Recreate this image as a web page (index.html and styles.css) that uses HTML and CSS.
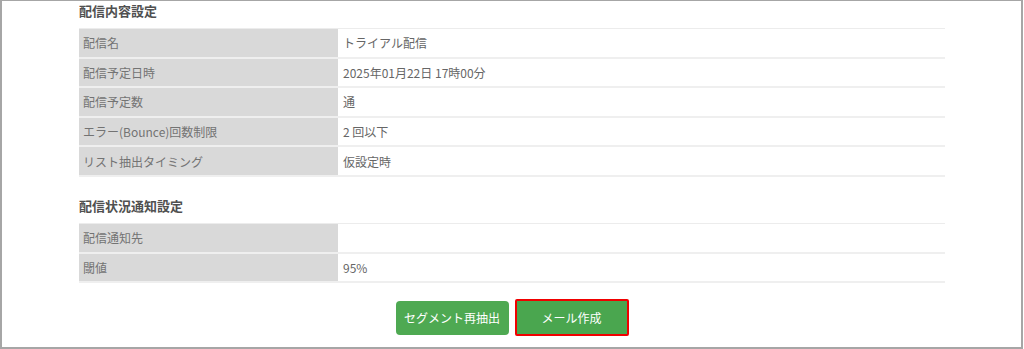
FILE: index.html
```html
<!DOCTYPE html>
<html lang="ja">
<head>
<meta charset="utf-8">
<link rel="stylesheet" href="styles.css">
</head>
<body>
<div class="frame">
  <div class="content">
    <h2 class="heading">配信内容設定</h2>
    <div class="table">
      <div class="row"><div class="label">配信名</div><div class="value">トライアル配信</div></div>
      <div class="row"><div class="label">配信予定日時</div><div class="value">2025年01月22日 17時00分</div></div>
      <div class="row"><div class="label">配信予定数</div><div class="value">通</div></div>
      <div class="row"><div class="label">エラー(Bounce)回数制限</div><div class="value">2 回以下</div></div>
      <div class="row"><div class="label">リスト抽出タイミング</div><div class="value">仮設定時</div></div>
    </div>
    <h2 class="heading heading-second">配信状況通知設定</h2>
    <div class="table">
      <div class="row"><div class="label">配信通知先</div><div class="value"></div></div>
      <div class="row"><div class="label">閾値</div><div class="value">95%</div></div>
    </div>
    <div class="actions">
      <button class="btn">セグメント再抽出</button>
      <button class="btn btn-highlight">メール作成</button>
    </div>
  </div>
</div>
</body>
</html>
```
FILE: styles.css
```css
html, body {
  margin: 0;
  padding: 0;
  background: #ffffff;
}
body {
  font-family: "Noto Sans CJK JP", "Noto Sans", sans-serif;
  font-size: 12px;
  color: #666;
}
.frame {
  box-sizing: border-box;
  width: 1023px;
  height: 349px;
  border-left: 2px solid #a6a6a6;
  border-right: 2px solid #a6a6a6;
  border-top: 1px solid #a6a6a6;
  border-bottom: 2px solid #a6a6a6;
  overflow: hidden;
}
.content {
  width: 866px;
  margin: 0 auto;
  padding-left: 1px;
}
.heading {
  margin: 0 0 7px 0;
  font-size: 13px;
  line-height: 20px;
  font-weight: bold;
  color: #505050;
}
.heading-second {
  margin-top: 19px;
}
.table {
  border-top: 1px solid #ececec;
}
.row {
  display: grid;
  grid-template-columns: 259px 1fr;
  height: 29.6px;
  box-sizing: border-box;
  border-bottom: 2px solid #efefef;
}
.label {
  background: #d9d9d9;
  padding-left: 4px;
  display: flex;
  align-items: center;
  color: #737373;
}
.value {
  background: #fff;
  padding-left: 5px;
  display: flex;
  align-items: center;
  color: #666;
}
.actions {
  display: flex;
  justify-content: center;
  align-items: center;
  gap: 6px;
  margin-top: 16px;
}
.btn {
  font-family: inherit;
  font-size: 12px;
  color: #fff;
  background: #4ea952;
  border: none;
  border-radius: 4px;
  width: 113px;
  height: 34px;
  padding: 0;
}
.btn-highlight {
  border: 2px solid #f00000;
  border-radius: 2px;
  width: 114px;
  height: 37px;
  background: #4aa64f;
}
```
